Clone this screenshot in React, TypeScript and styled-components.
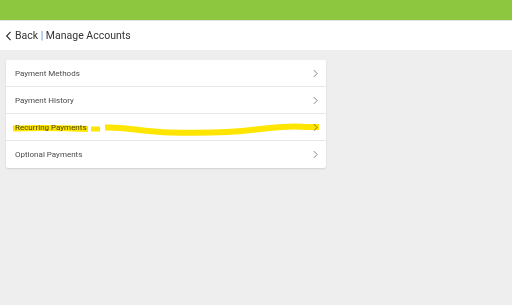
import React from 'react';
import styled, { createGlobalStyle } from 'styled-components';

const GlobalStyle = createGlobalStyle`
  html, body {
    margin: 0;
    padding: 0;
    background: #eeeeee;
    font-family: Roboto, "Liberation Sans", sans-serif;
  }
`;

const items = ['Payment Methods', 'Payment History', 'Recurring Payments', 'Optional Payments'];

export default function App() {
    return (
        <Page>
            <GlobalStyle />
            <TopBar />
            <Header>
                <BackChevron viewBox="0 0 8 12">
                    <path d="M6.5 1 L1.8 6 L6.5 11" fill="none" stroke="#333" strokeWidth="1.4" />
                </BackChevron>
                <Title>
                    Back <Divider>|</Divider> Manage Accounts
                </Title>
            </Header>
            <Content>
                <Card>
                    {items.map((label) => (
                        <Row key={label}>
                            <Label>{label}</Label>
                            <RowChevron viewBox="0 0 6 10">
                                <path d="M1 1 L5 5 L1 9" fill="none" stroke="#777" strokeWidth="1.1" />
                            </RowChevron>
                        </Row>
                    ))}
                    {/* highlighter scribble drawn over the third row */}
                    <Scribble viewBox="0 0 320 20">
                        <path d="M7 9.5 C30 8.5, 60 9, 82 10" fill="none" stroke="#ffe600" strokeWidth="6" />
                        <path d="M85 10 L94 10" fill="none" stroke="#ffe600" strokeWidth="5" />
                        <path
                            d="M99 8.5 C120 7.5, 135 13, 165 13.5 C200 14.5, 230 13, 250 10.5 C270 8, 285 6.5, 300 8 L313 8"
                            fill="none"
                            stroke="#ffe600"
                            strokeWidth="6"
                        />
                    </Scribble>
                </Card>
            </Content>
        </Page>
    );
}

const Page = styled.div`
  min-height: 305px;
  background: #eeeeee;
`;

const TopBar = styled.div`
  height: 20px;
  background: #8dc63f;
  border-bottom: 1px solid #e3e3e3;
`;

const Header = styled.div`
  height: 29px;
  background: #ffffff;
  display: flex;
  align-items: center;
  padding-left: 5px;
  gap: 3px;
`;

const BackChevron = styled.svg`
  width: 7px;
  height: 10px;
`;

const Title = styled.span`
  font-size: 10.5px;
  color: #333;
`;

const Divider = styled.span`
  color: #5b8dc8;
`;

const Content = styled.div`
  padding: 10px 6px;
`;

const Card = styled.div`
  position: relative;
  width: 320px;
  background: #ffffff;
  border-radius: 2px;
  box-shadow: 0 1px 2px rgba(0, 0, 0, 0.12);
`;

const Row = styled.div`
  box-sizing: border-box;
  height: 27px;
  display: flex;
  align-items: center;
  justify-content: space-between;
  padding: 0 8px 0 9px;
  border-bottom: 1px solid #e6e6e6;

  &:last-of-type {
    border-bottom: none;
  }
`;

const Label = styled.span`
  font-size: 8px;
  color: #4a4a4a;
`;

const RowChevron = styled.svg`
  width: 5px;
  height: 9px;
`;

const Scribble = styled.svg`
  position: absolute;
  left: 0;
  top: 59px;
  width: 320px;
  height: 20px;
  pointer-events: none;
  mix-blend-mode: multiply;
`;
